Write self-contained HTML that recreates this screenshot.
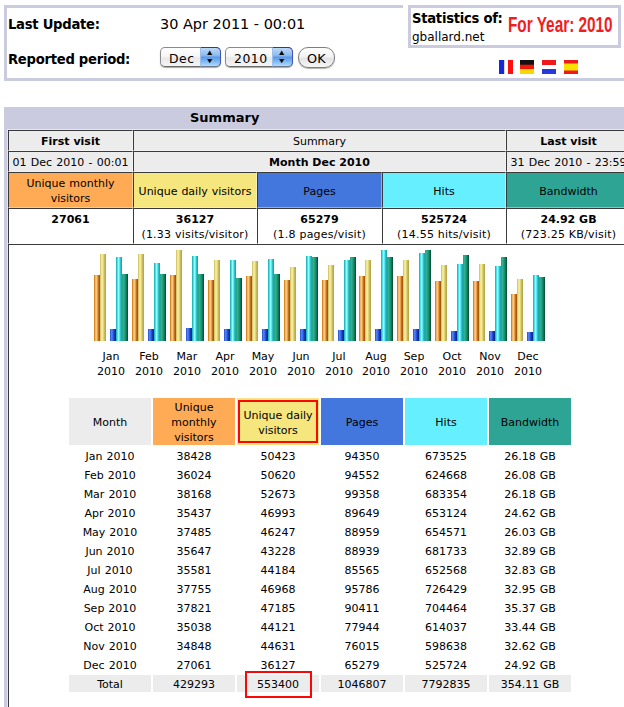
<!DOCTYPE html>
<html><head><meta charset="utf-8"><title>Statistics of gballard.net</title>
<style>
html,body{margin:0;padding:0;background:#fff;overflow:hidden;}
#w{position:absolute;left:0;top:0;width:624px;height:707px;overflow:hidden;background:#fff;}
body{width:624px;height:707px;overflow:hidden;position:relative;font-family:"DejaVu Sans","Liberation Sans",sans-serif;font-size:11px;color:#000;line-height:15px;}
.abs{position:absolute;}
#topbox{left:4px;top:5px;width:640px;height:76px;box-sizing:border-box;border:3px solid #cbcbe0;background:#fff;}
#cover{left:403px;top:0;width:230px;height:52px;background:#fff;}
#stat{left:408px;top:5px;width:213px;height:42.5px;box-sizing:border-box;border:3px solid #cbcbe0;background:#fff;}
.lb{font-weight:bold;font-size:13.2px;letter-spacing:-.28px;white-space:nowrap;line-height:16px;}
.t14{font-size:14.45px;white-space:nowrap;line-height:18px;}
#year{left:507.5px;top:12px;font-family:"Liberation Sans",sans-serif;font-weight:bold;font-size:22.5px;line-height:26px;color:#f21d1d;white-space:nowrap;transform-origin:0 0;transform:scaleX(0.682);}
.sel{height:19.5px;box-sizing:border-box;border:1px solid #8a8a8a;border-bottom-color:#6c6c6c;border-radius:5px;background:linear-gradient(#ffffff 0%,#f6f6f6 45%,#e9e9e9 55%,#f4f4f4 100%);box-shadow:0 1px 1px rgba(0,0,0,.35);font-size:12px;line-height:17px;}
.sel .bl{position:absolute;right:-1px;top:-1px;bottom:-1px;width:19px;background:linear-gradient(#bcd8f4 0%,#8ebcf0 40%,#5b9ae6 52%,#7db8f2 75%,#b0dcfc 100%);border:1px solid;border-color:#2b3ba6 #4456b4 #70788c #9cc0ee;border-radius:0 5px 5px 0;}
.sel .bl svg{position:absolute;left:0;top:0;width:19px;height:18px;}
.sel span{position:absolute;top:1.5px;font-size:12.4px;letter-spacing:.55px;}
#ok{left:298px;top:47px;width:37px;height:20.6px;box-sizing:border-box;border:1px solid #7d7d7d;border-radius:10px;background:linear-gradient(#ffffff 0%,#f3f3f3 45%,#e4e4e4 55%,#f6f6f6 100%);box-shadow:0 1px 1px rgba(0,0,0,.3);font-size:12.8px;line-height:22px;text-align:center;letter-spacing:.3px;}
.flag{top:60px;width:14px;height:14px;}
#sum{left:4px;top:107px;width:640px;height:610px;background:#cbcbe0;}
#sumt{left:190px;top:110px;font-weight:bold;font-size:13px;line-height:16px;}
#inner{left:7px;top:129px;width:625px;height:600px;background:#fff;border:1px solid #e6e6ee;box-sizing:border-box}
table.g{position:absolute;left:8px;top:130px;border-collapse:separate;border-spacing:0;table-layout:fixed;width:623px;}
table.g td{border-top:1px solid #3a3a3a;border-left:1px solid #3a3a3a;border-right:1px solid rgba(255,255,255,.4);border-bottom:1px solid rgba(255,255,255,.4);background-clip:border-box;padding:3px 2px 1px;text-align:center;vertical-align:middle;font-size:11px;line-height:15px;overflow:hidden;white-space:nowrap;box-sizing:border-box;}
table.g tr.h td{background:#ececec;height:21px;}
table.g tr.c td{height:36px;white-space:normal;word-spacing:.5px;}
table.g tr.v td{height:36px;vertical-align:top;background:#fff;}
b{font-weight:bold;}
.ls{letter-spacing:.22px;}
.b{position:absolute;width:6px;display:block;}
.bu{background:linear-gradient(90deg,#d88820 8.3%,#f0b868 25%,#f8c880 41.7%,#e8a050 58.3%,#c07020 75%,#a85808 91.7%);}
.bv{background:linear-gradient(90deg,#d8c870 8.3%,#f0e890 25%,#f2ea94 41.7%,#e0d478 58.3%,#c8b860 75%,#b8a850 91.7%);}
.bp{background:linear-gradient(90deg,#3060d8 8.3%,#5080f8 25%,#4070f0 41.7%,#2850d0 58.3%,#1838a8 75%,#102890 91.7%);}
.bh{background:linear-gradient(90deg,#28b8c0 8.3%,#50e0e8 25%,#90ffff 41.7%,#60e8f0 58.3%,#30c0c8 75%,#20a8b0 91.7%);}
.bk{background:linear-gradient(90deg,#28a888 8.3%,#30b090 25%,#28a080 41.7%,#189070 58.3%,#0c7858 75%,#045838 91.7%);}
.ml{position:absolute;top:349px;width:50px;text-align:center;font-size:11px;line-height:15px;}
table.d{position:absolute;left:67px;top:396px;border-collapse:separate;border-spacing:2px;table-layout:fixed;width:506px;}
table.d td{width:82px;padding:2px 0 0;word-spacing:.5px;text-align:center;font-size:11px;line-height:15px;height:17px;box-sizing:border-box;white-space:nowrap;}
table.d tr.hd td{height:47px;white-space:normal;}
table.d tr.tot td{background:#ececec;}
.red{border:2px solid #fa0808;box-sizing:border-box;}
</style></head><body>
<div id="w">
<div class="abs" id="topbox"></div>
<div class="abs lb" style="left:8px;top:16.5px">Last Update:</div>
<div class="abs lb" style="left:8px;top:52px">Reported period:</div>
<div class="abs t14" style="left:160px;top:15px">30 Apr 2011 - 00:01</div>
<div class="abs sel" style="left:160px;top:47px;width:61px"><span style="left:8px">Dec</span><div class="bl"><svg viewBox="0 0 19 18"><polygon points="6.1,6.9 11.3,6.9 8.7,2.6" fill="#0a0a0a"/><polygon points="6.1,11 11.3,11 8.7,15.2" fill="#0a0a0a"/></svg></div></div>
<div class="abs sel" style="left:225px;top:47px;width:68px"><span style="left:8px">2010</span><div class="bl"><svg viewBox="0 0 19 18"><polygon points="6.1,6.9 11.3,6.9 8.7,2.6" fill="#0a0a0a"/><polygon points="6.1,11 11.3,11 8.7,15.2" fill="#0a0a0a"/></svg></div></div>
<div class="abs" id="ok">OK</div>
<div class="abs" id="cover"></div>
<div class="abs" id="stat"></div>
<div class="abs lb" style="left:412px;top:10.5px;font-size:13.2px">Statistics of:</div>
<div class="abs" style="left:412px;top:29px;font-size:12px;line-height:16px">gballard.net</div>
<div class="abs" id="year">For Year: 2010</div>
<svg class="abs flag" style="left:499px" viewBox="0 0 14 14"><rect width="14" height="14" fill="#fff"/><rect width="5.2" height="14" fill="#1428d8"/><rect x="9" width="5" height="14" fill="#fa1010"/></svg>
<svg class="abs flag" style="left:520px" viewBox="0 0 14 14"><rect width="14" height="5" fill="#111"/><rect y="4.7" width="14" height="4.7" fill="#f01808"/><rect y="9.3" width="14" height="4.7" fill="#f8d800"/></svg>
<svg class="abs flag" style="left:542px" viewBox="0 0 14 14"><rect width="14" height="14" fill="#fff"/><rect width="14" height="5" fill="#f01818"/><rect y="9" width="14" height="5" fill="#2838e0"/></svg>
<svg class="abs flag" style="left:564px" viewBox="0 0 14 14"><rect width="14" height="14" fill="#f01818"/><rect y="3.5" width="14" height="7" fill="#f8e000"/></svg>

<div class="abs" id="sum"></div>
<div class="abs" id="sumt">Summary</div>
<div class="abs" id="inner"></div>
<table class="g"><colgroup><col style="width:125px"><col style="width:124px"><col style="width:125px"><col style="width:124px"><col style="width:125px"></colgroup>
<tr class="h"><td><b>First visit</b></td><td colspan="3">Summary</td><td><b>Last visit</b></td></tr>
<tr class="h"><td style="word-spacing:0.8px">01 Dec 2010 - 00:01</td><td colspan="3"><b>Month Dec 2010</b></td><td style="word-spacing:0.8px">31 Dec 2010 - 23:59</td></tr>
<tr class="c"><td style="background:#ffaa55">Unique monthly visitors</td><td style="background:#f6e67e">Unique daily visitors</td><td style="background:#4477dd">Pages</td><td style="background:#66f0ff">Hits</td><td style="background:#2ea495">Bandwidth</td></tr>
<tr class="v"><td><b>27061</b><br>&nbsp;</td><td><b>36127</b><br><span class="ls">(1.33 visits/visitor)</span></td><td><b>65279</b><br><span class="ls">(1.8 pages/visit)</span></td><td><b>525724</b><br><span class="ls">(14.55 hits/visit)</span></td><td><b>24.92 GB</b><br><span class="ls">(723.25 KB/visit)</span></td></tr>
<tr><td colspan="5" style="height:480px;background:#fff"></td></tr>
</table>
<i class="b bu" style="left:94px;top:275px;height:66px"></i><i class="b bv" style="left:100px;top:254px;height:87px"></i><i class="b bp" style="left:110px;top:329px;height:12px"></i><i class="b bh" style="left:116px;top:257px;height:84px"></i><i class="b bk" style="left:122px;top:274px;height:67px"></i><i class="b bu" style="left:132px;top:279px;height:62px"></i><i class="b bv" style="left:138px;top:254px;height:87px"></i><i class="b bp" style="left:148px;top:329px;height:12px"></i><i class="b bh" style="left:154px;top:263px;height:78px"></i><i class="b bk" style="left:160px;top:274px;height:67px"></i><i class="b bu" style="left:170px;top:275px;height:66px"></i><i class="b bv" style="left:176px;top:250px;height:91px"></i><i class="b bp" style="left:186px;top:328px;height:13px"></i><i class="b bh" style="left:192px;top:256px;height:85px"></i><i class="b bk" style="left:198px;top:274px;height:67px"></i><i class="b bu" style="left:208px;top:280px;height:61px"></i><i class="b bv" style="left:214px;top:260px;height:81px"></i><i class="b bp" style="left:224px;top:329px;height:12px"></i><i class="b bh" style="left:230px;top:260px;height:81px"></i><i class="b bk" style="left:236px;top:278px;height:63px"></i><i class="b bu" style="left:246px;top:276px;height:65px"></i><i class="b bv" style="left:252px;top:261px;height:80px"></i><i class="b bp" style="left:262px;top:329px;height:12px"></i><i class="b bh" style="left:268px;top:259px;height:82px"></i><i class="b bk" style="left:274px;top:274px;height:67px"></i><i class="b bu" style="left:284px;top:280px;height:61px"></i><i class="b bv" style="left:290px;top:267px;height:74px"></i><i class="b bp" style="left:300px;top:329px;height:12px"></i><i class="b bh" style="left:306px;top:256px;height:85px"></i><i class="b bk" style="left:312px;top:257px;height:84px"></i><i class="b bu" style="left:322px;top:280px;height:61px"></i><i class="b bv" style="left:328px;top:265px;height:76px"></i><i class="b bp" style="left:338px;top:330px;height:11px"></i><i class="b bh" style="left:344px;top:260px;height:81px"></i><i class="b bk" style="left:350px;top:257px;height:84px"></i><i class="b bu" style="left:359px;top:276px;height:65px"></i><i class="b bv" style="left:365px;top:260px;height:81px"></i><i class="b bp" style="left:375px;top:329px;height:12px"></i><i class="b bh" style="left:381px;top:250px;height:91px"></i><i class="b bk" style="left:387px;top:257px;height:84px"></i><i class="b bu" style="left:397px;top:276px;height:65px"></i><i class="b bv" style="left:403px;top:260px;height:81px"></i><i class="b bp" style="left:413px;top:329px;height:12px"></i><i class="b bh" style="left:419px;top:253px;height:88px"></i><i class="b bk" style="left:425px;top:250px;height:91px"></i><i class="b bu" style="left:435px;top:281px;height:60px"></i><i class="b bv" style="left:441px;top:265px;height:76px"></i><i class="b bp" style="left:451px;top:331px;height:10px"></i><i class="b bh" style="left:457px;top:264px;height:77px"></i><i class="b bk" style="left:463px;top:255px;height:86px"></i><i class="b bu" style="left:473px;top:281px;height:60px"></i><i class="b bv" style="left:479px;top:264px;height:77px"></i><i class="b bp" style="left:489px;top:331px;height:10px"></i><i class="b bh" style="left:495px;top:266px;height:75px"></i><i class="b bk" style="left:501px;top:257px;height:84px"></i><i class="b bu" style="left:511px;top:294px;height:47px"></i><i class="b bv" style="left:517px;top:279px;height:62px"></i><i class="b bp" style="left:527px;top:332px;height:9px"></i><i class="b bh" style="left:533px;top:275px;height:66px"></i><i class="b bk" style="left:539px;top:277px;height:64px"></i>
<div class="ml" style="left:86px">Jan<br>2010</div><div class="ml" style="left:124px">Feb<br>2010</div><div class="ml" style="left:162px">Mar<br>2010</div><div class="ml" style="left:200px">Apr<br>2010</div><div class="ml" style="left:238px">May<br>2010</div><div class="ml" style="left:276px">Jun<br>2010</div><div class="ml" style="left:314px">Jul<br>2010</div><div class="ml" style="left:351px">Aug<br>2010</div><div class="ml" style="left:389px">Sep<br>2010</div><div class="ml" style="left:427px">Oct<br>2010</div><div class="ml" style="left:465px">Nov<br>2010</div><div class="ml" style="left:503px">Dec<br>2010</div>
<table class="d">
<tr class="hd"><td style="background:#ececec">Month</td><td style="background:#ffaa55">Unique monthly visitors</td><td style="background:#f6e67e">Unique daily visitors</td><td style="background:#4477dd">Pages</td><td style="background:#66f0ff">Hits</td><td style="background:#2ea495">Bandwidth</td></tr>
<tr><td>Jan 2010</td><td>38428</td><td>50423</td><td>94350</td><td>673525</td><td>26.18 GB</td></tr><tr><td>Feb 2010</td><td>36024</td><td>50620</td><td>94552</td><td>624668</td><td>26.08 GB</td></tr><tr><td>Mar 2010</td><td>38168</td><td>52673</td><td>99358</td><td>683354</td><td>26.18 GB</td></tr><tr><td>Apr 2010</td><td>35437</td><td>46993</td><td>89649</td><td>653124</td><td>24.62 GB</td></tr><tr><td>May 2010</td><td>37485</td><td>46247</td><td>88959</td><td>654571</td><td>26.03 GB</td></tr><tr><td>Jun 2010</td><td>35647</td><td>43228</td><td>88939</td><td>681733</td><td>32.89 GB</td></tr><tr><td>Jul 2010</td><td>35581</td><td>44184</td><td>85565</td><td>652568</td><td>32.83 GB</td></tr><tr><td>Aug 2010</td><td>37755</td><td>46968</td><td>95786</td><td>726429</td><td>32.95 GB</td></tr><tr><td>Sep 2010</td><td>37821</td><td>47185</td><td>90411</td><td>704464</td><td>35.37 GB</td></tr><tr><td>Oct 2010</td><td>35038</td><td>44121</td><td>77944</td><td>614037</td><td>33.44 GB</td></tr><tr><td>Nov 2010</td><td>34848</td><td>44631</td><td>76015</td><td>598638</td><td>32.62 GB</td></tr><tr><td>Dec 2010</td><td>27061</td><td>36127</td><td>65279</td><td>525724</td><td>24.92 GB</td></tr>
<tr class="tot"><td>Total</td><td>429293</td><td>553400</td><td>1046807</td><td>7792835</td><td>354.11 GB</td></tr>
</table>
<div class="abs red" style="left:238px;top:400px;width:80px;height:43px"></div>
<div class="abs red" style="left:245px;top:671px;width:67px;height:26.5px"></div>
</div>
</body></html>
